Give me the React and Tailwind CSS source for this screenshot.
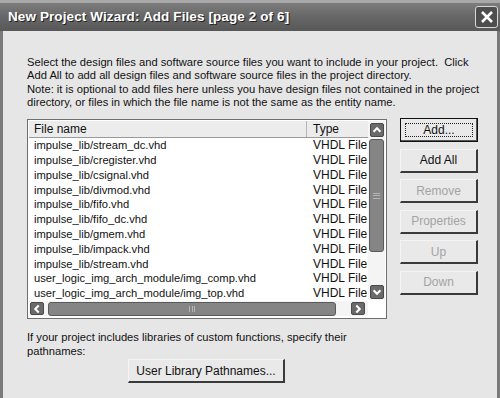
const files = [
  'impulse_lib/stream_dc.vhd',
  'impulse_lib/cregister.vhd',
  'impulse_lib/csignal.vhd',
  'impulse_lib/divmod.vhd',
  'impulse_lib/fifo.vhd',
  'impulse_lib/fifo_dc.vhd',
  'impulse_lib/gmem.vhd',
  'impulse_lib/impack.vhd',
  'impulse_lib/stream.vhd',
  'user_logic_img_arch_module/img_comp.vhd',
  'user_logic_img_arch_module/img_top.vhd',
];

const Arrow = ({ dir, className }) => {
  const paths = {
    up: 'M3 9 L7 5 L11 9',
    down: 'M3 5 L7 9 L11 5',
    left: 'M9 3 L5 7 L9 11',
    right: 'M5 3 L9 7 L5 11',
  };
  return (
    <div className={`flex items-center justify-center rounded-[2px] bg-[#6a6a6a] border border-[#4a4a4a] ${className}`}>
      <svg width="12" height="12" viewBox="0 0 14 14">
        <path d={paths[dir]} fill="none" stroke="#ffffff" strokeWidth="2.4" />
      </svg>
    </div>
  );
};

const WinButton = ({ label, disabled, isDefault, className = '' }) => (
  <div
    className={`h-[24px] flex items-center justify-center bg-[#e9e9e9] text-[12px] ${
      isDefault
        ? 'border border-[#111] shadow-[inset_-1px_-1px_0_#555]'
        : 'border-r-2 border-b-2 border-[#3a3a3a] border-t border-l border-t-[#f4f4f4] border-l-[#f4f4f4]'
    } ${disabled ? 'text-[#a3a3a3]' : 'text-[#111]'} ${className}`}
  >
    {isDefault ? (
      <div className="w-[calc(100%-8px)] h-[calc(100%-8px)] border border-dotted border-[#222] flex items-center justify-center">
        {label}
      </div>
    ) : (
      label
    )}
  </div>
);

export default function App() {
  return (
    <div
      className="w-[500px] h-[398px] overflow-hidden bg-[#7a7a7a] flex flex-col"
      style={{ fontFamily: '"Liberation Sans", Arial, sans-serif' }}
    >
      {/* Title bar */}
      <div className="h-[31px] shrink-0 border-t-[3px] border-[#a9a9a9] bg-gradient-to-b from-[#7d7d7d] via-[#666] to-[#585858] flex items-center justify-between pl-[8px] pr-[2px]">
        <span className="text-white font-bold text-[13.5px] tracking-[0.1px] [text-shadow:1px_1px_0_#222]">
          New Project Wizard: Add Files [page 2 of 6]
        </span>
        <div className="w-[23px] h-[22px] rounded-[3px] border border-[#d8d8d8] bg-[#4e4e4e] flex items-center justify-center">
          <svg width="14" height="14" viewBox="0 0 14 14">
            <path d="M2 2 L12 12 M12 2 L2 12" stroke="#ffffff" strokeWidth="2.6" />
          </svg>
        </div>
      </div>

      {/* Body */}
      <div className="flex-1 mx-[3px] bg-[#e6e6e6] pl-[24px] pt-[25px] text-[11.2px] text-[#111]">
        <p className="leading-[13.3px] whitespace-nowrap">
          Select the design files and software source files you want to include in your project.&nbsp; Click
          <br />
          Add All to add all design files and software source files in the project directory.
          <br />
          Note: it is optional to add files here unless you have design files not contained in the project
          <br />
          directory, or files in which the file name is not the same as the entity name.
        </p>

        <div className="flex mt-[10px]">
          {/* List box */}
          <div className="w-[360px] h-[200px] bg-white border border-[#6f6f6f] flex flex-col p-[1px]">
            <div className="flex flex-1 min-h-0">
              <div className="flex-1 flex flex-col text-[12px] text-[#111]">
                <div className="h-[17px] flex bg-[#ececec] border-b border-[#9a9a9a]">
                  <div className="w-[278px] pl-[5px] border-r border-[#b5b5b5] leading-[17px]">File name</div>
                  <div className="flex-1 pl-[6px] leading-[17px]">Type</div>
                </div>
                {files.map((f) => (
                  <div key={f} className="h-[14.8px] flex leading-[14.8px]">
                    <div className="w-[278px] pl-[5px] whitespace-nowrap overflow-hidden text-[11.2px]">{f}</div>
                    <div className="flex-1 pl-[6px] whitespace-nowrap overflow-hidden">VHDL File</div>
                  </div>
                ))}
              </div>
              {/* Vertical scrollbar */}
              <div className="w-[17px] flex flex-col items-center pt-[2px] pb-[1px] bg-[#f4f4f4]">
                <Arrow dir="up" className="w-[14px] h-[14px]" />
                <div className="w-[15px] h-[113px] mt-[2px] rounded-[3px] bg-[#858585] border border-[#5a5a5a] flex items-center justify-center">
                  <div className="w-[7px] h-[6px] border-y border-[#b5b5b5] flex items-center">
                    <div className="w-full h-px bg-[#b5b5b5]" />
                  </div>
                </div>
                <div className="flex-1" />
                <Arrow dir="down" className="w-[14px] h-[14px]" />
              </div>
            </div>
            {/* Horizontal scrollbar */}
            <div className="h-[17px] flex items-center">
              <div className="w-[339px] h-[15px] flex items-center pl-[1px] bg-[#f4f4f4]">
                <Arrow dir="left" className="w-[14px] h-[13px]" />
                <div className="w-[288px] h-[14px] ml-[4px] rounded-[3px] bg-[#858585] border border-[#5a5a5a] flex items-center justify-center">
                  <div className="w-[6px] h-[6px] border-x border-[#b5b5b5] flex justify-center">
                    <div className="w-px h-full bg-[#b5b5b5]" />
                  </div>
                </div>
                <div className="flex-1" />
                <Arrow dir="right" className="w-[14px] h-[13px] mr-[3px]" />
              </div>
              <div className="flex-1" />
            </div>
          </div>

          {/* Buttons */}
          <div className="ml-[13px] w-[78px] flex flex-col gap-[6.5px] -mt-[1px]">
            <WinButton label="Add..." isDefault />
            <WinButton label="Add All" />
            <WinButton label="Remove" disabled />
            <WinButton label="Properties" disabled />
            <WinButton label="Up" disabled />
            <WinButton label="Down" disabled />
          </div>
        </div>

        <p className="mt-[11px] leading-[14px] whitespace-nowrap">
          If your project includes libraries of custom functions, specify their
          <br />
          pathnames:
        </p>
        <WinButton label="User Library Pathnames..." className="w-[157px] h-[23px] ml-[101px] mt-[1px]" />
      </div>
    </div>
  );
}
